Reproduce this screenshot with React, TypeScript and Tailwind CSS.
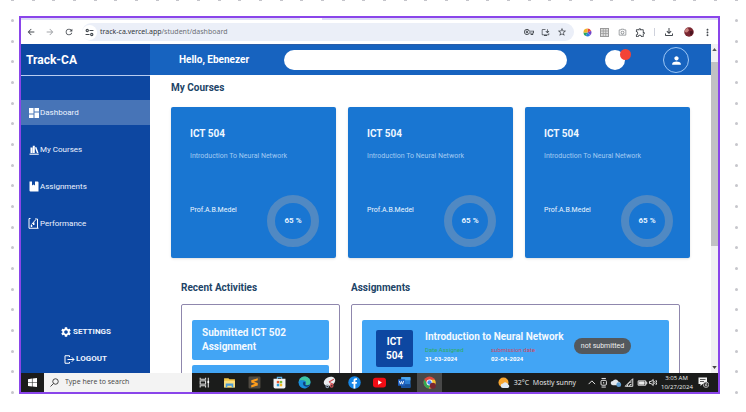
import type { ReactNode } from "react";
import {
  MdArrowBack,
  MdArrowForward,
  MdRefresh,
  MdStarBorder,
  MdOutlineExtension,
  MdOutlineFileDownload,
  MdMoreVert,
  MdSettings,
  MdPerson,
  MdOutlineVpnKey,
  MdOutlineCameraAlt,
  MdOutlineInstallDesktop,
} from "react-icons/md";

function Dots({ count, vertical }: { count: number; vertical?: boolean }) {
  return (
    <div
      aria-hidden="true"
      className={
        vertical
          ? "flex flex-col justify-between items-center w-[3px] shrink-0"
          : "flex justify-between items-center h-px"
      }
    >
      {Array.from({ length: count }, (_, i) => (
        <span
          key={i}
          className={vertical ? "size-[3px] rounded-full bg-[#c6c6cc]" : "w-[3px] h-px bg-[#c4c4ca]"}
        />
      ))}
    </div>
  );
}

function TuneIcon() {
  return (
    <svg viewBox="0 0 16 16" className="size-[9px]" fill="none" stroke="#444a50" strokeWidth="2">
      <circle cx="4" cy="4.5" r="2" />
      <path d="M8 4.5h7M1 11.5h7" />
      <circle cx="12" cy="11.5" r="2" />
    </svg>
  );
}

function DashboardIcon() {
  return (
    <svg viewBox="0 0 20 20" className="size-[10px]" fill="#fff">
      <path d="M0 0h9v11H0zM0 13h9v7H0zM11 0h9v7h-9zM11 9h9v11h-9z" />
    </svg>
  );
}

function BooksIcon() {
  return (
    <svg viewBox="0 0 20 20" className="size-[10px]" fill="#fff">
      <path d="M3 5h4v11H3zM7.6 1.5h4V16h-4zM12 5.2l2.6-1L19 15.400l-3 .9z" />
      <path d="M1 17.300h18.500V19.500H1z" />
    </svg>
  );
}

function BookmarkBookIcon() {
  return (
    <svg viewBox="0 0 20 22" className="w-[10px] h-[11px]" fill="#fff">
      <path d="M1 1h5v8l3-2 3 2V1h5a2 2 0 0 1 2 2v18H3a2 2 0 0 1-2-2z" />
    </svg>
  );
}

function ChartIcon() {
  return (
    <svg viewBox="0 0 22 22" className="size-[11px]" fill="none" stroke="#fff" strokeWidth="2">
      <path d="M5 1H2v19.500h19M14 2h5v18" />
      <path d="M7 18v-4M11.500 14V9" strokeWidth="3" />
      <path d="M7 13l8-9" />
    </svg>
  );
}

function LogoutIcon() {
  return (
    <svg viewBox="0 0 22 18" className="w-[11px] h-[9px]" fill="none" stroke="#fff" strokeWidth="2">
      <path d="M11 4V1.500H2v15h9V14M7 9h13M15.500 4.500L20 9l-4.500 4.500" />
    </svg>
  );
}

function BrowserBar() {
  return (
    <div className="shrink-0 bg-white">
      <div className="flex h-[2px] bg-[#dcdcf6]">
        <div className="w-2/5" />
        <div className="w-[22px] bg-white" />
      </div>
      <div className="flex h-6 items-center text-[#454a50]">
        <div className="flex w-[61px] items-center justify-between pl-[5px] pr-2">
          <button aria-label="Back"><MdArrowBack size={10} /></button>
          <button aria-label="Forward"><MdArrowForward size={10} color="#a3a6aa" /></button>
          <button aria-label="Reload"><MdRefresh size={10} /></button>
        </div>
        <div className="flex h-[18px] flex-1 items-center rounded-full bg-[#ebeff8] pr-[7px]">
          <span className="mr-[3px] flex size-[15px] items-center justify-center rounded-full bg-white">
            <TuneIcon />
          </span>
          <span className="flex-1 whitespace-nowrap font-['Noto_Sans',sans-serif] text-[7px] leading-3 text-[#6b7077]">
            <span className="text-[#33373c]">track-ca.vercel.app</span>/student/dashboard
          </span>
          <span className="flex items-center gap-[7px]">
            <MdOutlineVpnKey size={10} />
            <MdOutlineInstallDesktop size={9} />
            <MdStarBorder size={10} />
          </span>
        </div>
        <div className="flex w-[144px] items-center justify-between pl-[9px] pr-[5px]">
          <svg viewBox="0 0 20 20" className="size-[9px]">
            <path d="M10 10V1a9 9 0 0 1 8 5z" fill="#e8453c" />
            <path d="M10 10l8-4a9 9 0 0 1-2 10z" fill="#7446c8" />
            <path d="M10 10l6 6a9 9 0 0 1-10 2z" fill="#2d7de0" />
            <path d="M10 10l-4 8a9 9 0 0 1-5-8z" fill="#23a566" />
            <path d="M10 10H1a9 9 0 0 1 9-9z" fill="#f0b429" />
          </svg>
          <svg viewBox="0 0 18 18" className="size-[9px]" fill="none" stroke="#9a9a9a" strokeWidth="2">
            <rect x="1" y="1" width="16" height="16" fill="#dedede" />
            <path d="M6.500 2v14M11.500 2v14M2 6h14M2 11h14" strokeWidth="1.500" />
          </svg>
          <MdOutlineCameraAlt size={9} color="#85898d" />
          <MdOutlineExtension size={11} />
          <span className="h-2 w-px bg-[#cfd2dc]" />
          <MdOutlineFileDownload size={12} />
          <svg viewBox="0 0 20 20" className="size-[10px]">
            <circle cx="10" cy="10" r="9.500" fill="#7a2630" />
            <path d="M3 4l5-2 2 5-4 4-5-1z" fill="#c9807c" />
            <path d="M11 9l6-2 1 6-5 4z" fill="#4b1420" />
          </svg>
          <button aria-label="Menu"><MdMoreVert size={11} /></button>
        </div>
      </div>
    </div>
  );
}

function NavItem({ icon, label, active }: { icon: ReactNode; label: string; active?: boolean }) {
  return (
    <a
      href="#"
      className={
        "flex h-[25px] items-center gap-px pl-[7px] text-[8px] leading-3 text-[#eef4ff] " +
        (active ? "bg-[#4774b7]" : "")
      }
    >
      <span className="flex w-[11px] justify-center">{icon}</span>
      {label}
    </a>
  );
}

function Sidebar() {
  return (
    <aside className="flex w-[129px] shrink-0 flex-col bg-[#0d47a1]">
      <div className="flex h-8 shrink-0 items-center border-b border-[#b9cdf0] pl-[5px]">
        <span className="text-[12px] leading-4 font-bold text-white">Track-CA</span>
      </div>
      <nav className="mt-6 flex flex-col gap-3">
        <NavItem active label="Dashboard" icon={<DashboardIcon />} />
        <NavItem label="My Courses" icon={<BooksIcon />} />
        <NavItem label="Assignments" icon={<BookmarkBookIcon />} />
        <NavItem label="Performance" icon={<ChartIcon />} />
      </nav>
      <div className="mt-auto mb-2 flex flex-col items-center gap-[15px] text-[8px] leading-3 font-bold text-[#eef4ff]">
        <button className="flex items-center gap-px"><MdSettings size={12} color="#fff" />SETTINGS</button>
        <button className="flex items-center gap-px"><LogoutIcon />LOGOUT</button>
      </div>
    </aside>
  );
}

function TopBar() {
  return (
    <header className="flex h-[31px] shrink-0 items-center gap-[38px] border-t border-[#2a5da8] bg-[#1763bf] pr-[22px] pl-[29px]">
      <span className="w-[67px] text-[10px] leading-4 font-bold whitespace-nowrap text-white">Hello, Ebenezer</span>
      <input type="text" aria-label="Search" className="h-5 min-w-0 flex-1 rounded-full bg-white px-3 text-[9px]" />
      <button aria-label="Notifications" className="relative size-5 shrink-0 rounded-full bg-white">
        <span className="absolute -top-px -right-[6px] size-[11px] rounded-full bg-[#f44336]" />
      </button>
      <button
        aria-label="Profile"
        className="flex size-[26px] shrink-0 items-center justify-center rounded-full border border-[#9cc6f5] text-white"
      >
        <MdPerson size={13} />
      </button>
    </header>
  );
}

function CourseCard({ percent }: { percent: number }) {
  return (
    <article className="h-[151px] rounded-[2px] bg-[#1976d2] pt-[19px] pr-[17px] pl-[19px] shadow-sm">
      <h3 className="text-[10px] leading-4 font-bold text-[#eef6ff]">ICT 504</h3>
      <p className="mt-2 text-[7px] leading-3 whitespace-nowrap text-[#a3cbf3]">Introduction To Neural Network</p>
      <div className="mt-[33px] flex justify-between">
        <p className="mt-[9px] text-[7px] leading-3 text-[#eef6ff]">Prof.A.B.Medel</p>
        <div className="flex size-[52px] items-center justify-center rounded-full border-8 border-[#5089c3] text-[8px] leading-3 font-bold text-[#e3f2ff]">
          {percent} %
        </div>
      </div>
    </article>
  );
}

function SectionTitle({ children }: { children: ReactNode }) {
  return <h2 className="text-[10px] leading-4 font-bold text-[#1d4467]">{children}</h2>;
}

function Dashboard() {
  return (
    <main className="min-h-0 flex-1 overflow-hidden bg-white px-[21px] pt-[5px]">
      <SectionTitle>My Courses</SectionTitle>
      <div className="mt-[11px] grid grid-cols-3 gap-3">
        <CourseCard percent={65} />
        <CourseCard percent={65} />
        <CourseCard percent={65} />
      </div>
      <div className="mt-[22px] flex gap-[11px] px-[10px]">
        <section className="w-[159px] shrink-0">
          <SectionTitle>Recent Activities</SectionTitle>
          <div className="mt-2 flex flex-col gap-[5px] rounded-[2px] border border-[#8f87ad] px-[10px] py-[15px]">
            <div className="rounded-[2px] bg-[#42a5f5] px-[10px] py-[6px] text-[10px] leading-[14px] font-bold text-[#f3f9ff]">
              Submitted ICT 502 Assignment
            </div>
            <div className="h-10 rounded-[2px] bg-[#42a5f5]" />
          </div>
        </section>
        <section className="min-w-0 flex-1">
          <SectionTitle>Assignments</SectionTitle>
          <div className="mt-2 rounded-[2px] border border-[#8f87ad] px-[10px] py-[15px]">
            <div className="flex h-[62px] items-start rounded-[2px] bg-[#42a5f5] pt-[10px] pr-[38px] pl-[14px]">
              <div className="flex size-[37px] shrink-0 items-center justify-center rounded-[2px] bg-[#0d47a1] text-center text-[10px] leading-[14px] font-bold text-white">
                ICT
                <br />
                504
              </div>
              <div className="ml-3">
                <h3 className="text-[10px] leading-[14px] font-bold whitespace-nowrap text-[#f3f9ff]">
                  Introduction to Neural Network
                </h3>
                <div className="mt-px flex gap-5 text-[6px] leading-[9px] font-bold text-white">
                  <p className="w-[46px] whitespace-nowrap">
                    <span className="block font-normal text-[#2fae62]">Date Assigned</span>
                    31-03-2024
                  </p>
                  <p className="whitespace-nowrap">
                    <span className="block font-normal text-[#d0455f]">submission date</span>
                    02-04-2024
                  </p>
                </div>
              </div>
              <span className="mt-2 ml-auto flex h-4 w-[57px] items-center justify-center rounded-full bg-[#53585d] text-[7px] leading-3 whitespace-nowrap text-[#eeeeee]">
                not submitted
              </span>
            </div>
          </div>
        </section>
      </div>
    </main>
  );
}

function ScrollBar() {
  return (
    <div aria-hidden="true" className="flex w-[7px] shrink-0 flex-col items-center bg-[#f1f1f3] py-1">
      <svg viewBox="0 0 6 4" className="h-[3px] w-[5px]"><path d="M3 0l3 4H0z" fill="#555" /></svg>
      <div className="mt-[11px] h-[184px] w-full bg-[#c1c1c4]" />
      <svg viewBox="0 0 6 4" className="mt-auto h-[3px] w-[5px]"><path d="M0 0h6L3 4z" fill="#444" /></svg>
    </div>
  );
}

function TaskIcon({ label, active, children }: { label: string; active?: boolean; children: ReactNode }) {
  return (
    <button
      aria-label={label}
      className={"flex h-full w-[25px] items-center justify-center " + (active ? "bg-[#484848]" : "")}
    >
      <svg viewBox="0 0 24 24" className="size-[13px]">{children}</svg>
    </button>
  );
}

function TaskBar() {
  return (
    <div className="flex h-[19px] shrink-0 items-center bg-[#1b1c1b] font-['Open_Sans',sans-serif] text-[#eeeeee]">
      <button aria-label="Start" className="flex w-[23px] justify-center">
        <svg viewBox="0 0 16 16" className="size-[9px]" fill="#fff">
          <path d="M0 2l7-1v6.500H0zM8 .9L16 0v7.500H8zM0 8.500h7V15l-7-1zM8 8.500h8V16l-8-.9z" />
        </svg>
      </button>
      <label className="flex h-full w-[148px] items-center gap-[6px] bg-[#f3f3f3] pl-[6px]">
        <svg viewBox="0 0 18 18" className="size-[9px]" fill="none" stroke="#333" strokeWidth="1.800">
          <circle cx="11" cy="7" r="5.500" />
          <path d="M7 11l-6 6" />
        </svg>
        <input
          type="text"
          aria-label="Type here to search"
          placeholder="Type here to search"
          className="w-[110px] bg-transparent text-[7px] placeholder:text-[#444444]"
        />
      </label>
      <TaskIcon label="Task view">
        <g fill="none" stroke="#ddd" strokeWidth="2">
          <path d="M4 3v3h10V3M4 21v-3h10v3" />
          <rect x="4" y="9" width="10" height="6" />
          <path d="M19 3v18" />
        </g>
        <path d="M17.500 9h3v4h-3z" fill="#fff" />
      </TaskIcon>
      <TaskIcon label="File Explorer">
        <path d="M2 4h8l2 2h10v15H2z" fill="#f3c84b" />
        <path d="M2 9h20v12H2z" fill="#fbdf7e" />
        <path d="M5 14h14v7h-3v-3H8v3H5z" fill="#4a9bd8" />
      </TaskIcon>
      <TaskIcon label="Sublime Text">
        <rect x="1" y="1" width="22" height="22" rx="2" fill="#504a42" />
        <path d="M18 4v4l-7 2.500 7 2.500v4.500L6 21v-4l7-2.500L6 12V8z" fill="#ff9d1c" />
      </TaskIcon>
      <TaskIcon label="Microsoft Store">
        <path d="M8 6V2.500h8V6" fill="none" stroke="#5fb3e8" strokeWidth="2" />
        <path d="M1 5h22v15a3 3 0 0 1-3 3H4a3 3 0 0 1-3-3z" fill="#f4f4f4" />
        <path d="M7 9h4.500v4.500H7z" fill="#e4572e" />
        <path d="M12.500 9H17v4.500h-4.500z" fill="#7cb82f" />
        <path d="M7 14.500h4.500V19H7z" fill="#2a9fe0" />
        <path d="M12.500 14.500H17V19h-4.500z" fill="#f5b921" />
      </TaskIcon>
      <TaskIcon label="Microsoft Edge">
        <circle cx="12" cy="12" r="11" fill="#1479cc" />
        <path d="M1.500 10C3 4 7 1 12 1c7 0 11 5 11 10 0 4-3 6-6 6-2 0-3.500-1-3-2 2-2 1-6-3-6.500C7 8 3 9 1.500 10z" fill="#3ec6a0" />
        <path d="M9 12c-1 4 2 9 8 9.500A11 11 0 0 1 1.500 10C4 7 9 8 11 9c-1 .5-2 1.500-2 3z" fill="#1a8fdc" />
        <path d="M9.500 12c1-2 4-1 4 1 0 1-1 2 0 3 2 2 6 1 8.500-1-2 4-5 5-7 4.500-4-.5-6.500-4-5.500-7.500z" fill="#123f78" />
      </TaskIcon>
      <TaskIcon label="Snipping Tool">
        <ellipse cx="12" cy="10" rx="11" ry="8" fill="#eceef0" transform="rotate(-25 12 10)" />
        <path d="M11 11l9-5M12 12l7 3" stroke="#c9474b" strokeWidth="2" />
        <circle cx="8" cy="19" r="2.500" fill="none" stroke="#8a9aac" strokeWidth="2" />
        <circle cx="16" cy="18" r="2.500" fill="none" stroke="#d4555a" strokeWidth="2" />
      </TaskIcon>
      <TaskIcon label="Facebook">
        <circle cx="12" cy="12" r="11.500" fill="#1686e6" />
        <path d="M10.200 23v-8.500H7V11h3.200V8.500C10.200 5.500 12 4 14.600 4c1 0 2 .2 2 .2v3h-1.300c-1.300 0-1.700.8-1.700 1.700V11h3l-.5 3.500h-2.500V23z" fill="#fff" />
      </TaskIcon>
      <TaskIcon label="YouTube">
        <rect x="0" y="3" width="24" height="18" rx="5" fill="#f20d15" />
        <path d="M9.500 8v8l7-4z" fill="#fff" />
      </TaskIcon>
      <TaskIcon label="Word">
        <rect x="6" y="2" width="17" height="20" rx="1.500" fill="#2b7cd3" />
        <path d="M6 2h17v6H6z" fill="#4aa5ee" />
        <path d="M6 15h17v7H6z" fill="#174f9c" />
        <rect x="0" y="6" width="13" height="12" rx="1" fill="#1c5dbe" />
        <path d="M2.500 9l2 6 2-5 2 5 2-6" fill="none" stroke="#fff" strokeWidth="1.600" />
      </TaskIcon>
      <TaskIcon label="Chrome" active>
        <circle cx="12" cy="12" r="11" fill="#e04a3f" />
        <path d="M2.500 6.500A11 11 0 0 0 11 23l5-9-8 0z" fill="#36a852" />
        <path d="M12 7h10a11 11 0 0 1-11 16l5.500-9z" fill="#f4c22e" />
        <circle cx="12" cy="12" r="5.500" fill="#fff" />
        <circle cx="12" cy="12" r="4" fill="#4285f4" />
        <circle cx="18" cy="18" r="5.500" fill="#7a2630" />
      </TaskIcon>
      <div className="ml-auto flex items-center pr-[9px]">
        <svg viewBox="0 0 24 24" className="size-3">
          <circle cx="11" cy="11" r="10" fill="#f5a531" />
          <path d="M10 22a4.500 4.500 0 0 1 0-9 6 6 0 0 1 10.500 2A3.800 3.800 0 0 1 20 22z" fill="#dfe8f2" />
        </svg>
        <span className="ml-1 text-[7px] leading-3 whitespace-pre">32°C  Mostly sunny</span>
        <svg viewBox="0 0 130 20" className="ml-[11px] h-[11px] w-[70px]" fill="none" stroke="#e8e8e8" strokeWidth="1.800">
          <path d="M3 13l6-6 6 6" />
          <rect x="26" y="6" width="10" height="9" rx="2" />
          <path d="M27 2.500h8M27 18.500h8M31 9v3" />
          <path d="M48 15a4 4 0 0 1 0-8 5.500 5.500 0 0 1 10 1 3.500 3.500 0 0 1 0 7z" fill="#e3e7ec" stroke="none" />
          <circle cx="59" cy="14" r="4.500" fill="#5f9fd2" stroke="none" />
          <path d="M71 17L85 3v14zM75 17a8 8 0 0 1 8-8M79 17a4 4 0 0 1 4-4" />
          <path d="M95 7h14v8H95zM109 9.500h2v3h-2" />
          <path d="M97 9h9v4h-9z" fill="#eee" />
          <path d="M116 8h3l4-3.500v11L119 12h-3zM125.500 7.500a4 4 0 0 1 0 5M128 5.500a7 7 0 0 1 0 9" />
        </svg>
        <div className="ml-1 w-[31px] text-center text-[6px] leading-[9px] whitespace-nowrap">
          3:05 AM
          <br />
          10/27/2024
        </div>
        <svg viewBox="0 0 22 22" className="ml-[6px] size-[11px]">
          <path d="M1 1h17v13H9l-4 4v-4H1z" fill="#f2f2f2" />
          <path d="M4 5h11M4 9h8" stroke="#333" strokeWidth="1.600" />
          <circle cx="16" cy="15.500" r="5.500" fill="#333" stroke="#ccc" strokeWidth="1.500" />
          <path d="M17.500 12.500c-3 0-3.500 5.500-1.500 5.500s2-3 0-3" fill="none" stroke="#fff" strokeWidth="1.300" />
        </svg>
      </div>
    </div>
  );
}

export default function App() {
  return (
    <div className="flex h-screen flex-col overflow-hidden bg-white pr-2 pb-[18px] pl-[11px] font-[Roboto,sans-serif]">
      <Dots count={36} />
      <div className="flex min-h-0 flex-1 justify-between">
        <div className="flex pt-[18px]"><Dots count={19} vertical /></div>
        <div className="mt-[15px] ml-[5px] flex min-w-0 flex-1 flex-col overflow-hidden border-2 border-[#8a45ea]">
          <BrowserBar />
          <div className="flex min-h-0 flex-1">
            <Sidebar />
            <div className="flex min-w-0 flex-1 flex-col">
              <TopBar />
              <Dashboard />
            </div>
            <ScrollBar />
          </div>
          <TaskBar />
        </div>
        <div className="ml-[15px] flex pt-[18px]"><Dots count={19} vertical /></div>
      </div>
    </div>
  );
}
